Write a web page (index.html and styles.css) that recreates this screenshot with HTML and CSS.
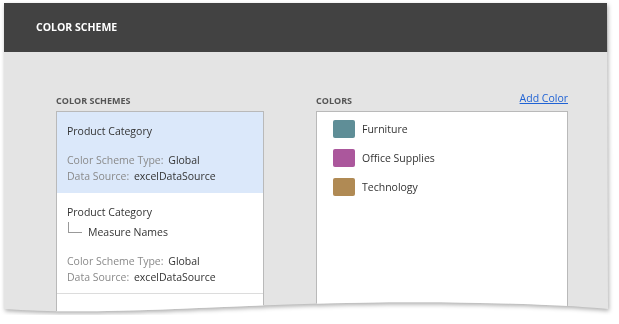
FILE: index.html
```html
<!DOCTYPE html>
<html lang="en">
  <head>
    <meta charset="UTF-8" />
    <meta name="viewport" content="width=device-width, initial-scale=1.0" />
    <title>Color Scheme</title>
    <link rel="stylesheet" href="styles.css">
  </head>
  <body>
    <div class="sheet">
      <div class="panel">
        <div class="header">COLOR SCHEME</div>
        <div class="content">
          <div class="schemes">
            <div class="label">COLOR SCHEMES</div>
            <div class="box">
              <div class="scheme selected">
                <div class="title">Product Category</div>
                <div class="meta">
                  <div><span class="key">Color Scheme Type:</span> Global</div>
                  <div><span class="key">Data Source:</span> excelDataSource</div>
                </div>
              </div>
              <div class="scheme">
                <div class="title">Product Category</div>
                <div class="sub"><span class="tree"></span>Measure Names</div>
                <div class="meta">
                  <div><span class="key">Color Scheme Type:</span> Global</div>
                  <div><span class="key">Data Source:</span> excelDataSource</div>
                </div>
              </div>
            </div>
          </div>
          <div class="colors">
            <div class="label-row">
              <div class="label">COLORS</div>
              <a href="#" class="add">Add Color</a>
            </div>
            <div class="box">
              <div class="color"><span class="swatch furniture"></span>Furniture</div>
              <div class="color"><span class="swatch office"></span>Office Supplies</div>
              <div class="color"><span class="swatch tech"></span>Technology</div>
            </div>
          </div>
        </div>
      </div>
    </div>
  </body>
</html>
```

FILE: styles.css
```css
html,
body {
  overflow: hidden;
}

body {
  margin: 0;
  padding: 3px 0 0 4px;
  background: #fff;
  font-family: "Open Sans", "Noto Sans", sans-serif;
  font-size: 10.5px;
  color: #333;
}

.sheet {
  width: 605px;
  filter: drop-shadow(1px 2px 2px rgba(0, 0, 0, 0.32));
}

.panel {
  height: 312px;
  overflow: hidden;
  background: #e4e4e4;
  clip-path: path("M0 0 L603 0 L604 306 C540 300 420 297 300 301 C180 305 80 312 0 306 Z");
}

.header {
  height: 49px;
  background: #424242;
  color: #fff;
  font-weight: bold;
  font-size: 10.5px;
  line-height: 49px;
  padding-left: 32px;
}

.content {
  display: flex;
  gap: 52px;
  padding: 40px 0 0 52px;
}

.schemes {
  width: 208px;
}

.colors {
  width: 252px;
}

.label {
  font-weight: bold;
  font-size: 9px;
  color: #555;
  height: 19px;
  line-height: 18px;
}

.label-row {
  display: flex;
  justify-content: space-between;
  align-items: flex-start;
}

.add {
  color: #1f62d4;
  font-size: 10.5px;
  line-height: 14px;
  margin-top: -1px;
}

.box {
  background: #fff;
  border: 1px solid #b9b9b9;
  height: 210px;
}

.scheme {
  padding: 11px 10px 8px;
  border-bottom: 1px solid #dcdcdc;
  line-height: 16px;
}

.scheme.selected {
  background: #dbe8fa;
  border-bottom: none;
  padding-bottom: 9px;
}

.sub {
  margin-top: 4px;
  display: flex;
  align-items: center;
}

.tree {
  width: 13px;
  height: 10px;
  margin: -9px 6px 0 1px;
  border-left: 1px solid #999;
  border-bottom: 1px solid #999;
}

.meta {
  margin-top: 13px;
}

.key {
  color: #8a8a8a;
  margin-right: 2px;
}

.color {
  display: flex;
  align-items: center;
  height: 29px;
  padding-left: 16px;
}

.color:first-child {
  margin-top: 2px;
}

.swatch {
  width: 22px;
  height: 18px;
  border-radius: 2px;
  margin-right: 7px;
}

.furniture {
  background: #5f8e97;
}

.office {
  background: #ab579c;
}

.tech {
  background: #b08a54;
}
```
